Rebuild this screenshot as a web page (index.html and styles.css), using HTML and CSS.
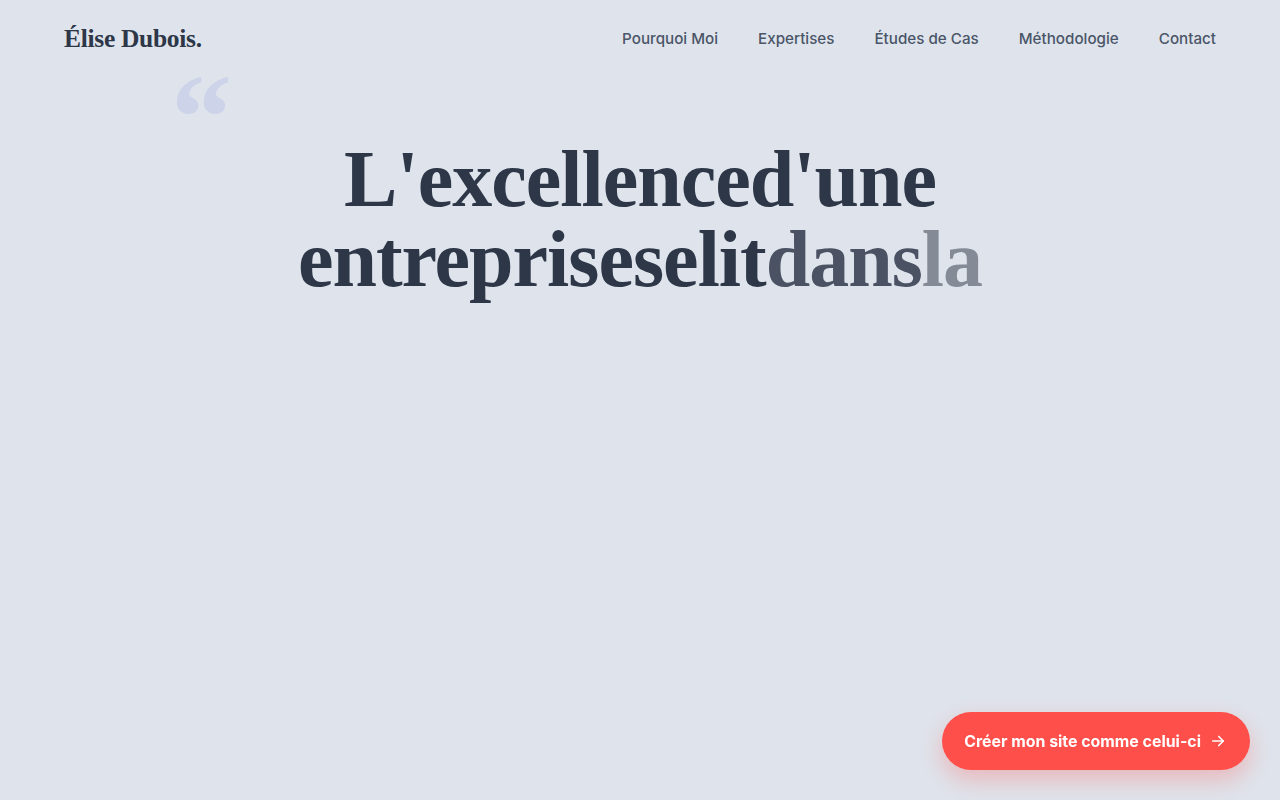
FILE: index.html
```html
<!DOCTYPE html>
<html lang="fr">
<head>
<meta charset="utf-8">
<title>Élise Dubois</title>
<link rel="stylesheet" href="styles.css">
</head>
<body>
<header class="header">
  <a class="logo" href="#">Élise Dubois.</a>
  <nav class="nav">
    <a href="#">Pourquoi Moi</a>
    <a href="#">Expertises</a>
    <a href="#">Études de Cas</a>
    <a href="#">Méthodologie</a>
    <a href="#">Contact</a>
  </nav>
</header>
<main class="hero">
  <span class="quote">&ldquo;</span>
  <h1 class="title">
    <span class="w">L'excellence</span><span class="w">d'une</span><br>
    <span class="w">entreprise</span><span class="w">se</span><span class="w">lit</span><span class="w w-fade1">dans</span><span class="w w-fade2">la</span>
  </h1>
</main>
<a class="cta" href="#">Créer mon site comme celui-ci
  <svg class="cta-icon" viewBox="0 0 24 24" width="18" height="18" fill="none" stroke="currentColor" stroke-width="2.2" stroke-linecap="round" stroke-linejoin="round"><path d="M5 12h14"/><path d="M13 6l6 6-6 6"/></svg>
</a>
</body>
</html>
```
FILE: styles.css
```css
* { box-sizing: border-box; }
html, body { margin: 0; padding: 0; }
body {
  background: #dfe4ec;
  font-family: Inter, "Noto Sans", sans-serif;
  color: #2d3748;
  min-height: 800px;
}
.header {
  display: flex;
  justify-content: space-between;
  align-items: center;
  height: 76px;
  padding: 0 64px;
}
.logo {
  font-family: "Liberation Serif", "DejaVu Serif", serif;
  font-weight: 700;
  font-size: 25.5px;
  color: #2d3748;
  text-decoration: none;
  letter-spacing: -0.3px;
  margin-top: 2px;
}
.nav {
  display: flex;
  gap: 40px;
}
.nav a {
  font-size: 15.2px;
  font-weight: 500;
  color: #4a5568;
  text-decoration: none;
}
.hero {
  position: relative;
  padding-top: 63px;
  text-align: center;
}
.quote {
  position: absolute;
  left: 171px;
  top: 12px;
  font-family: "Liberation Serif", serif;
  font-weight: 700;
  font-size: 122px;
  line-height: 60px;
  height: 40px;
  color: #cdd3e8;
}
.title {
  margin: 0;
  font-family: "Liberation Serif", "DejaVu Serif", serif;
  font-weight: 700;
  font-size: 80px;
  line-height: 80px;
  color: #2d3748;
  letter-spacing: -1px;
}
.w { display: inline-block; }
.w-fade1 { color: #4a5263; }
.w-fade2 { color: #848b96; }
.cta {
  position: fixed;
  right: 30px;
  bottom: 30px;
  height: 58px;
  padding: 0 23px 0 22px;
  display: flex;
  align-items: center;
  gap: 8px;
  background: #ff4f4a;
  color: #fff;
  border-radius: 29px;
  font-size: 15.9px;
  font-weight: 700;
  text-decoration: none;
  box-shadow: 0 10px 24px rgba(255, 79, 74, 0.3);
}
.cta-icon { display: block; }
```
